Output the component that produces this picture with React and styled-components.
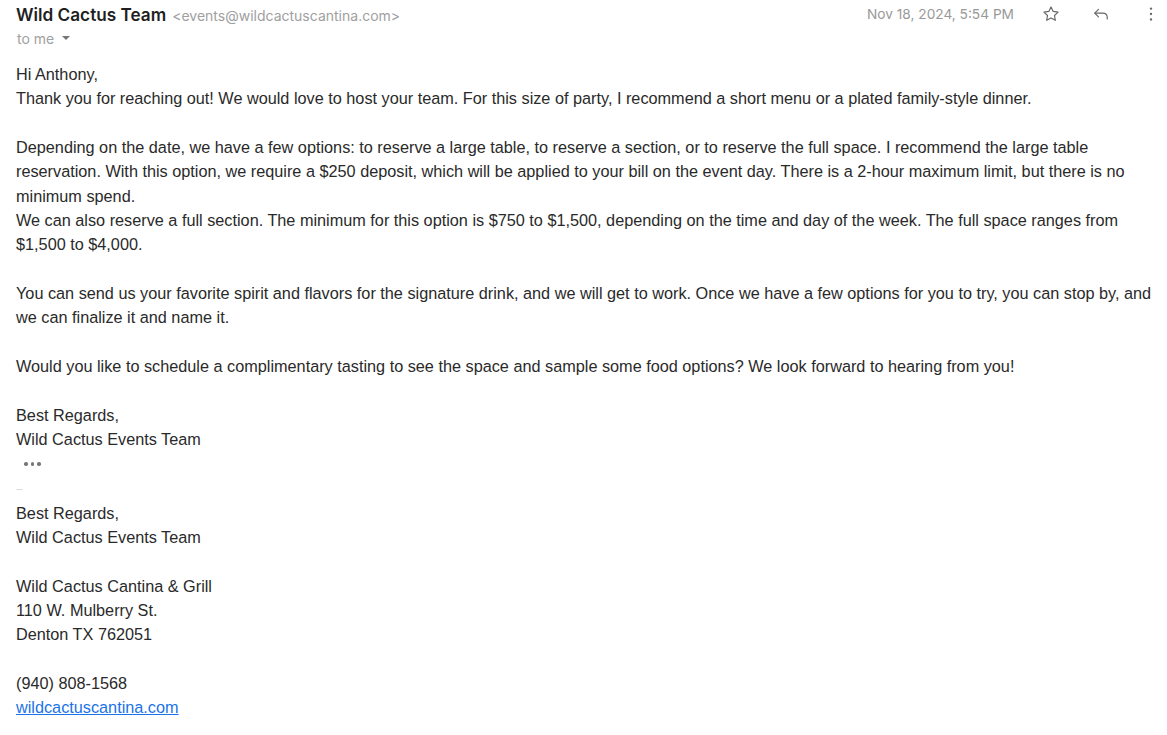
import styled, { createGlobalStyle } from "styled-components";

const GlobalStyle = createGlobalStyle`
  body {
    margin: 0;
    background: #ffffff;
  }
`;

export default function App() {
  return (
    <>
      <GlobalStyle />
      <Page>
        <Header>
          <Sender>
            <SenderName>Wild Cactus Team</SenderName>
            <SenderEmail>&lt;events@wildcactuscantina.com&gt;</SenderEmail>
          </Sender>
          <Meta>
            <DateText>Nov 18, 2024, 5:54 PM</DateText>
            <IconButton aria-label="Star">
              <svg width="20" height="20" viewBox="0 0 24 24" fill="none" stroke="#666" strokeWidth="1.4" strokeLinejoin="round">
                <path d="M12 3.5l2.6 5.4 5.9.8-4.3 4.1 1 5.8L12 16.8l-5.2 2.8 1-5.8-4.3-4.1 5.9-.8z" />
              </svg>
            </IconButton>
            <IconButton aria-label="Reply">
              <svg width="20" height="20" viewBox="0 0 24 24" fill="none" stroke="#666" strokeWidth="1.4" strokeLinecap="round" strokeLinejoin="round">
                <path d="M9 6.5L4.5 11 9 15.5" />
                <path d="M4.8 11H14c3.3 0 5.5 2.2 5.5 5.5V18" />
              </svg>
            </IconButton>
            <IconButton aria-label="More">
              <svg width="20" height="20" viewBox="0 0 24 24" fill="#666">
                <circle cx="12" cy="5.5" r="1.4" />
                <circle cx="12" cy="12" r="1.4" />
                <circle cx="12" cy="18.5" r="1.4" />
              </svg>
            </IconButton>
          </Meta>
        </Header>
        <Recipient>
          to me <Caret />
        </Recipient>

        <Body>
          <Line>Hi Anthony,</Line>
          <Line>
            Thank you for reaching out! We would love to host your team. For this size of party, I recommend a short
            menu or a plated family-style dinner.
          </Line>
          <Blank />
          <Line>
            Depending on the date, we have a few options: to reserve a large table, to reserve a section, or to reserve
            the full space. I recommend the large table reservation. With this option, we require a $250 deposit, which
            will be applied to your bill on the event day. There is a 2-hour maximum limit, but there is no minimum
            spend.
          </Line>
          <Line>
            We can also reserve a full section. The minimum for this option is $750 to $1,500, depending on the time and
            day of the week. The full space ranges from $1,500 to $4,000.
          </Line>
          <Blank />
          <Line>
            You can send us your favorite spirit and flavors for the signature drink, and we will get to work. Once we
            have a few options for you to try, you can stop by, and we can finalize it and name it.
          </Line>
          <Blank />
          <Line>
            Would you like to schedule a complimentary tasting to see the space and sample some food options? We look
            forward to hearing from you!
          </Line>
          <Blank />
          <Line>Best Regards,</Line>
          <Line>Wild Cactus Events Team</Line>

          <Ellipsis aria-label="Show trimmed content">
            <Dot />
            <Dot />
            <Dot />
          </Ellipsis>

          <SigDivider>--</SigDivider>
          <Line>Best Regards,</Line>
          <Line>Wild Cactus Events Team</Line>
          <Blank />
          <Line>Wild Cactus Cantina &amp; Grill</Line>
          <Line>110 W. Mulberry St.</Line>
          <Line>Denton TX 762051</Line>
          <Blank />
          <Line>(940) 808-1568</Line>
          <Line>
            <SiteLink href="#">wildcactuscantina.com</SiteLink>
          </Line>
        </Body>
      </Page>
    </>
  );
}

const Page = styled.div`
  padding: 0 1px 0 16px;
  font-family: "Liberation Sans", Arial, sans-serif;
  color: #2a2a2a;
`;

const Header = styled.div`
  display: flex;
  justify-content: space-between;
  align-items: center;
  height: 26px;
  padding-top: 1px;
`;

const Sender = styled.div`
  display: flex;
  align-items: baseline;
  gap: 6px;
`;

const SenderName = styled.span`
  font-family: Inter, "Noto Sans", sans-serif;
  font-weight: 600;
  font-size: 17.2px;
  color: #1f1f1f;
`;

const SenderEmail = styled.span`
  font-family: Inter, "Noto Sans", sans-serif;
  font-size: 14px;
  color: #a0a0a0;
`;

const Meta = styled.div`
  display: flex;
  align-items: center;
  gap: 20px;
`;

const DateText = styled.span`
  font-family: Inter, "Noto Sans", sans-serif;
  font-size: 13.7px;
  color: #999999;
  margin-right: 2px;
`;

const IconButton = styled.button`
  display: flex;
  align-items: center;
  justify-content: center;
  width: 30px;
  height: 26px;
  padding: 0;
  border: none;
  background: none;
  cursor: pointer;
`;

const Recipient = styled.div`
  display: flex;
  align-items: center;
  gap: 8px;
  height: 22px;
  padding-left: 1px;
  font-family: Inter, "Noto Sans", sans-serif;
  font-size: 14px;
  color: #a0a0a0;
`;

const Caret = styled.span`
  width: 0;
  height: 0;
  border-left: 4px solid transparent;
  border-right: 4px solid transparent;
  border-top: 4px solid #777;
`;

const Body = styled.div`
  padding-top: 13px;
  font-size: 16.25px;
  line-height: 24.35px;
  max-width: 1140px;
`;

const Line = styled.div``;

const Blank = styled.div`
  height: 24.35px;
`;

const Ellipsis = styled.div`
  display: flex;
  gap: 3px;
  align-items: center;
  height: 25px;
  padding-left: 8px;
`;

const Dot = styled.span`
  width: 3.5px;
  height: 3.5px;
  border-radius: 50%;
  background: #777;
`;

const SigDivider = styled.div`
  font-size: 10px;
  line-height: 24px;
  color: #cfcfcf;
`;

const SiteLink = styled.a`
  color: #1a73e8;
  text-decoration: underline;
`;
